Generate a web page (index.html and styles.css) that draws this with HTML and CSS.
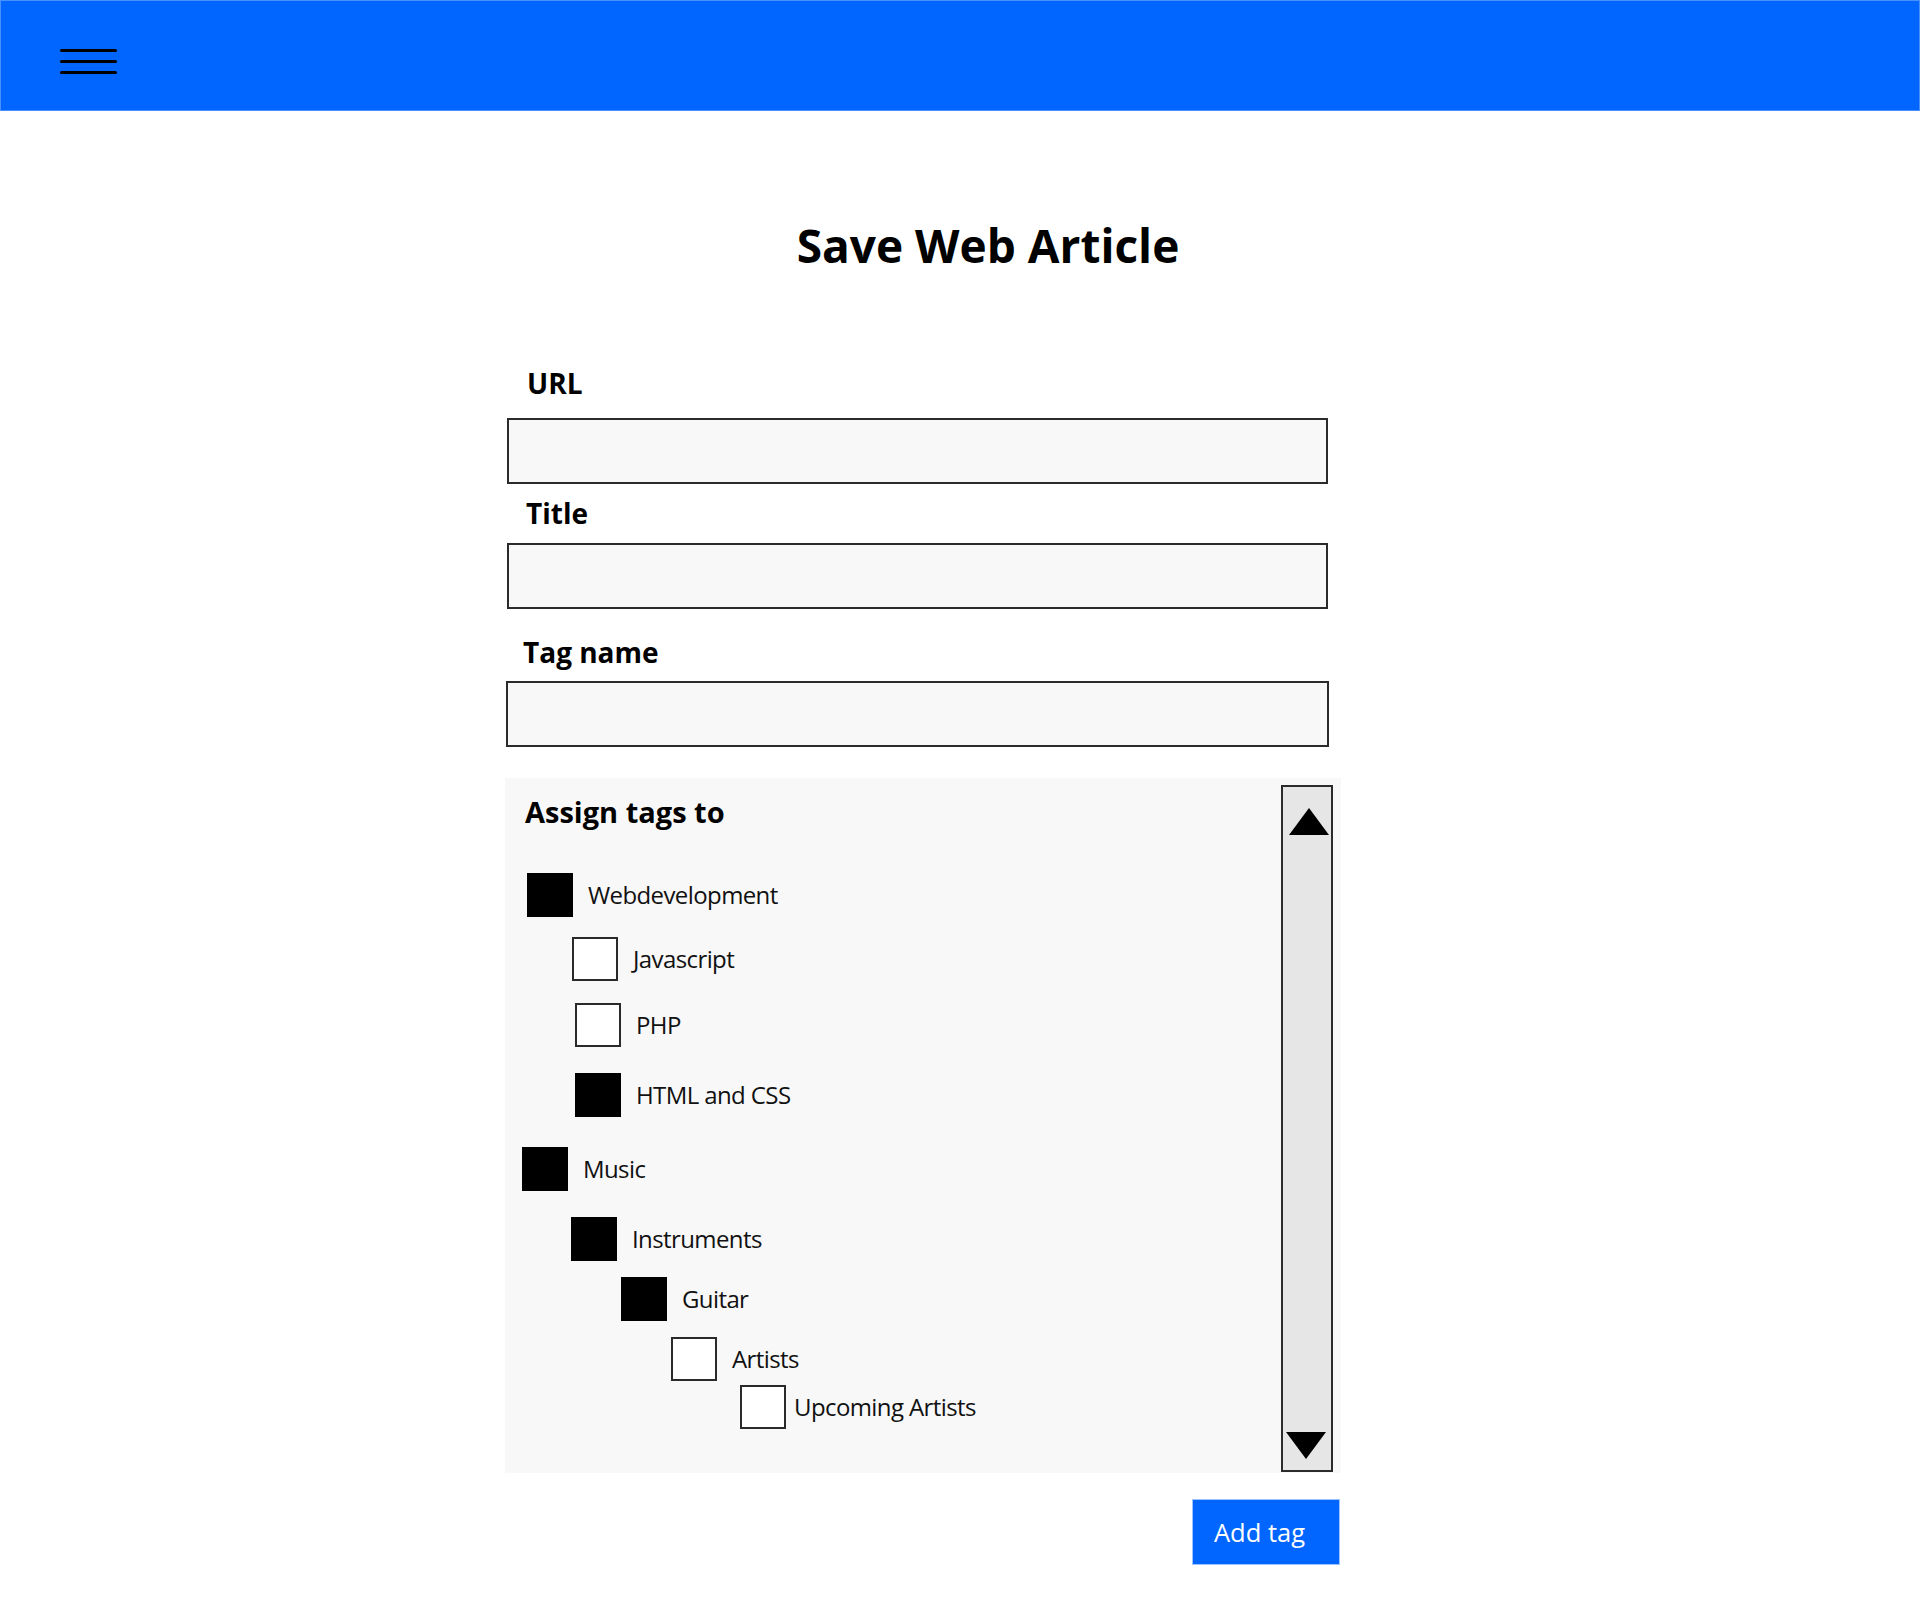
FILE: index.html
```html
<!DOCTYPE html>
<html lang="en">
<head>
<meta charset="utf-8">
<title>Save Web Article</title>
<link rel="stylesheet" href="styles.css">
</head>
<body>
<header class="topbar">
  <div class="hamburger" aria-label="Menu">
    <span></span><span></span><span></span>
  </div>
</header>
<main class="page">
  <h1 class="page-title">Save Web Article</h1>
  <form class="form">
    <label class="field-label label-url">URL</label>
    <div class="text-input"></div>
    <label class="field-label label-title">Title</label>
    <div class="text-input"></div>
    <label class="field-label label-tag">Tag name</label>
    <div class="text-input input-tag"></div>

    <section class="tag-panel">
      <div class="tag-content">
        <h2 class="tag-heading">Assign tags to</h2>
        <ul class="tag-tree">
          <li class="tag-row row-1"><span class="box checked"></span><span class="tag-text">Webdevelopment</span></li>
          <li class="tag-row row-2"><span class="box"></span><span class="tag-text">Javascript</span></li>
          <li class="tag-row row-3"><span class="box"></span><span class="tag-text">PHP</span></li>
          <li class="tag-row row-4"><span class="box checked"></span><span class="tag-text">HTML and CSS</span></li>
          <li class="tag-row row-5"><span class="box checked"></span><span class="tag-text">Music</span></li>
          <li class="tag-row row-6"><span class="box checked"></span><span class="tag-text">Instruments</span></li>
          <li class="tag-row row-7"><span class="box checked"></span><span class="tag-text">Guitar</span></li>
          <li class="tag-row row-8"><span class="box"></span><span class="tag-text">Artists</span></li>
          <li class="tag-row row-9"><span class="box"></span><span class="tag-text tight">Upcoming Artists</span></li>
        </ul>
      </div>
      <div class="scrollbar">
        <span class="arrow-up"></span>
        <span class="arrow-down"></span>
      </div>
    </section>

    <div class="actions">
      <button type="button" class="add-btn">Add tag</button>
    </div>
  </form>
</main>
</body>
</html>
```

FILE: styles.css
```css
* { box-sizing: border-box; }

html, body {
  margin: 0;
  padding: 0;
  background: #ffffff;
}

body {
  font-family: "Open Sans", "Noto Sans", sans-serif;
  color: #000;
}

.topbar {
  height: 111px;
  background: #0066ff;
  border: 1px solid #4a90ff;
  display: flex;
  align-items: flex-start;
}

.hamburger {
  margin-left: 59px;
  margin-top: 48px;
  display: flex;
  flex-direction: column;
  gap: 8px;
}

.hamburger span {
  display: block;
  width: 57px;
  height: 3px;
  border-radius: 2px;
  background: #000;
}

.page {
  margin-left: 505px;
  width: 836px;
}

.page-title {
  margin: 111px 0 0 0;
  padding-left: 130px;
  text-align: center;
  font-size: 46px;
  line-height: 46px;
  font-weight: 700;
  letter-spacing: 0;
}

.form {
  display: flex;
  flex-direction: column;
  align-items: flex-start;
}

.field-label {
  display: block;
  font-size: 28px;
  line-height: 28px;
  font-weight: 700;
  letter-spacing: 0;
  margin-left: 22px;
}

.label-url { margin-top: 101px; margin-bottom: 21px; }
.label-title { margin-top: 15px; margin-bottom: 16px; margin-left: 21px; }
.label-tag { margin-top: 29px; margin-bottom: 15px; margin-left: 18px; }

.text-input {
  width: 821px;
  height: 66px;
  margin-left: 2px;
  background: #f8f8f8;
  border: 2px solid #2b2b2b;
}

.input-tag {
  width: 823px;
  margin-left: 1px;
}

.tag-panel {
  margin-top: 31px;
  width: 836px;
  height: 695px;
  background: #f8f8f8;
  display: flex;
  align-items: stretch;
}

.tag-content {
  flex: 1;
  padding: 20px 0 0 17px;
}

.tag-heading {
  margin: 0 0 0 3px;
  font-size: 29px;
  line-height: 28px;
  font-weight: 700;
  letter-spacing: 0;
}

.tag-tree {
  list-style: none;
  margin: 47px 0 0 0;
  padding: 0;
}

.tag-row {
  display: flex;
  align-items: center;
  height: 44px;
}

.box {
  flex: none;
  width: 46px;
  height: 44px;
  border: 2px solid #2a2a2a;
  background: #ffffff;
}

.box.checked {
  background: #000;
  border-color: #000;
}

.tag-text {
  margin-left: 15px;
  font-size: 24px;
  line-height: 28px;
  letter-spacing: -0.6px;
  color: #111;
}

.tag-text.tight { margin-left: 8px; }

.row-1 { margin-left: 5px; }
.row-2 { margin-top: 20px; margin-left: 50px; }
.row-3 { margin-top: 22px; margin-left: 53px; }
.row-4 { margin-top: 26px; margin-left: 53px; }
.row-5 { margin-top: 30px; margin-left: 0; }
.row-6 { margin-top: 26px; margin-left: 49px; }
.row-7 { margin-top: 16px; margin-left: 99px; }
.row-8 { margin-top: 16px; margin-left: 149px; }
.row-9 { margin-top: 4px; margin-left: 218px; }

.scrollbar {
  flex: none;
  width: 52px;
  margin: 7px 8px 1px 0;
  background: #e6e6e6;
  border: 2px solid #2b2b2b;
  display: flex;
  flex-direction: column;
  justify-content: space-between;
  padding: 21px 0 11px 0;
}

.arrow-up {
  display: block;
  width: 0;
  height: 0;
  margin-left: 6px;
  border-left: 20px solid transparent;
  border-right: 20px solid transparent;
  border-bottom: 27px solid #000;
}

.arrow-down {
  display: block;
  width: 0;
  height: 0;
  margin-left: 3px;
  border-left: 20px solid transparent;
  border-right: 20px solid transparent;
  border-top: 27px solid #000;
}

.actions {
  width: 836px;
  display: flex;
  justify-content: flex-end;
  margin-top: 26px;
}

.add-btn {
  width: 148px;
  height: 66px;
  margin-right: 1px;
  padding: 0 0 0 21px;
  text-align: left;
  background: #0066ff;
  border: 1px solid #9cc2ff;
  color: #fff;
  font-family: "Open Sans", "Noto Sans", sans-serif;
  font-size: 25.5px;
  line-height: 30px;
  cursor: pointer;
}
```
